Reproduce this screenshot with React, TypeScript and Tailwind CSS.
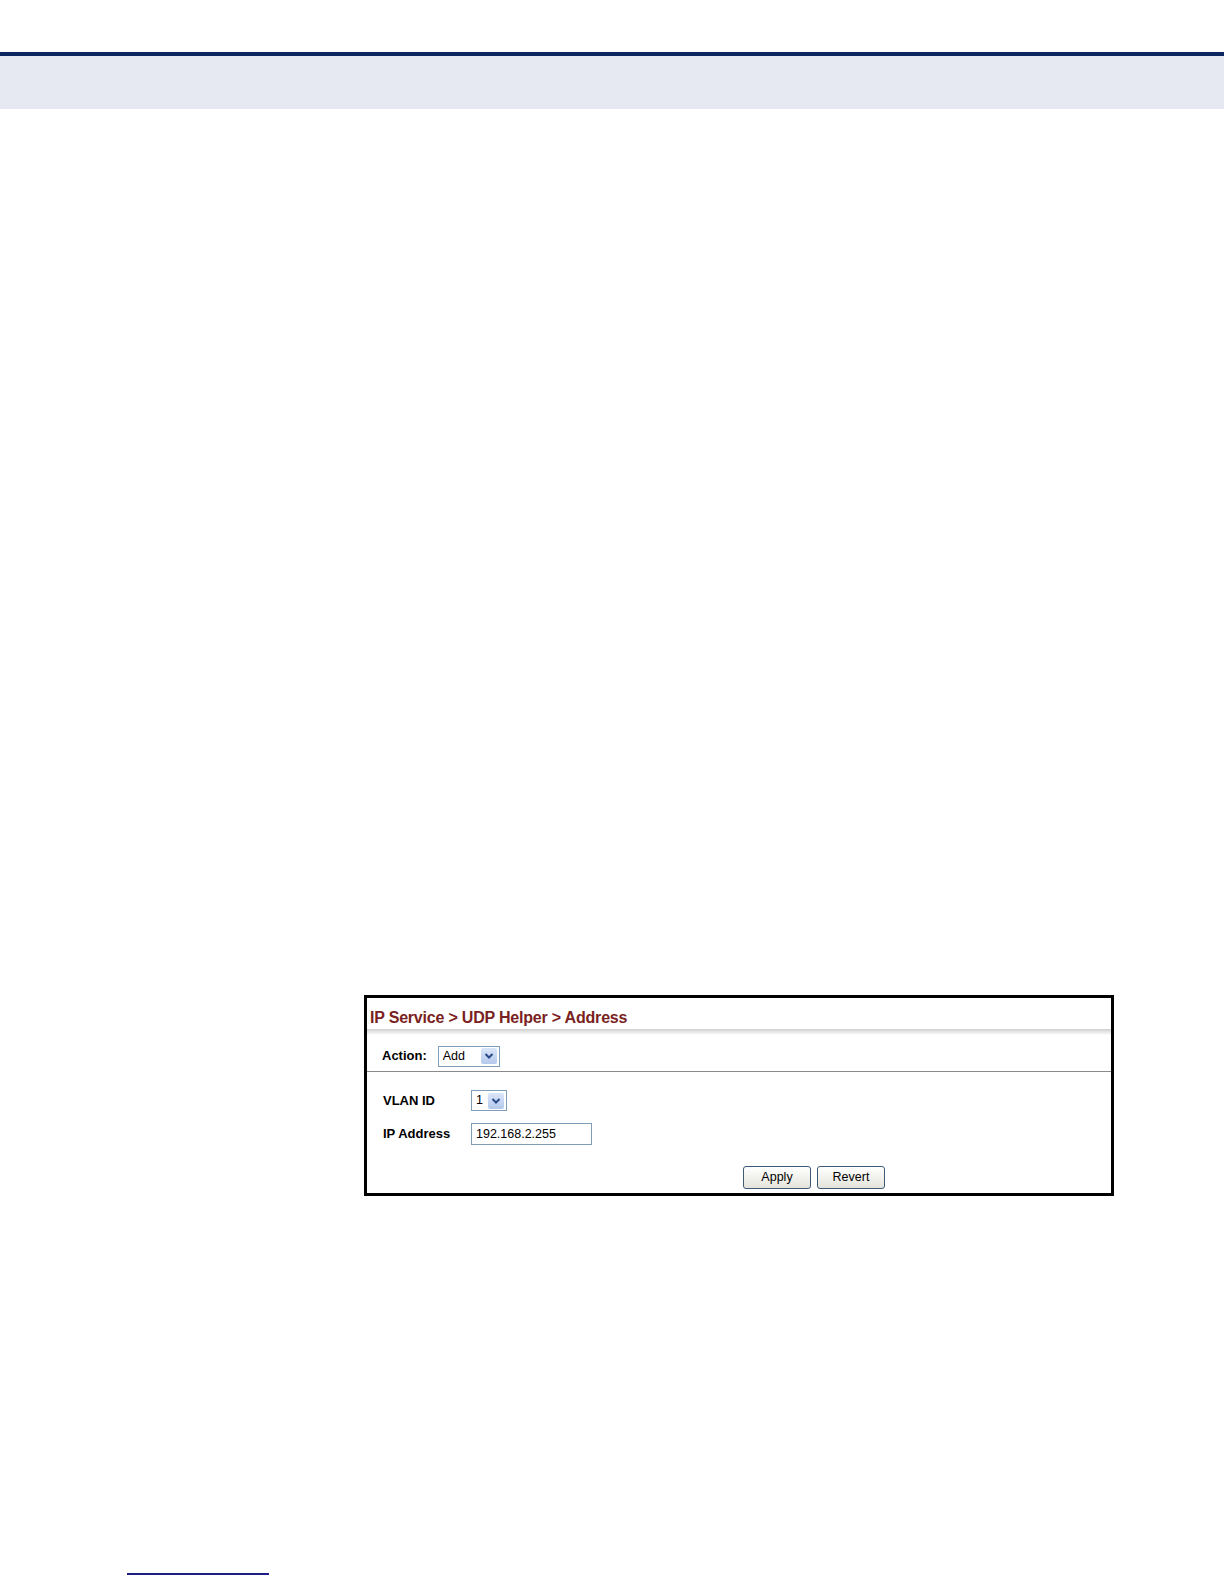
import React from "react";

function Arrow() {
  return (
    <span className="flex h-[16px] w-[16px] items-center justify-center rounded-[2px] bg-gradient-to-b from-[#dbe6f8] to-[#b4c8ec]">
      <svg width="10" height="8" viewBox="0 0 10 8">
        <path d="M1.5 2 L5 5.5 L8.5 2" fill="none" stroke="#2a4a8a" strokeWidth="2" />
      </svg>
    </span>
  );
}

function Select({ value, width }: { value: string; width: string }) {
  return (
    <div className={`flex h-[21px] items-center justify-between border border-[#7f9db9] bg-white pl-[4px] pr-[2px] ${width}`}>
      <span className="text-[12.5px] text-black">{value}</span>
      <Arrow />
    </div>
  );
}

function Button({ label }: { label: string }) {
  return (
    <button className="h-[23px] w-[68px] rounded-[3px] border border-[#3c5a78] bg-gradient-to-b from-white to-[#e4e4dc] text-[12.5px] text-black">
      {label}
    </button>
  );
}

export default function App() {
  return (
    <div className="min-h-[1584px] w-full bg-white font-['Liberation_Sans',Arial,sans-serif]">
      <div className="h-[52px]" />
      <div className="h-[4px] bg-[#0b2660]" />
      <div className="h-[53px] bg-[#e6e9f1]" />

      <div className="ml-[364px] mt-[886px] h-[201px] w-[750px] border-[3px] border-black">
        <div className="flex h-[31px] items-center pl-[3px] pt-[8px]">
          <span className="text-[16px] font-bold tracking-[-0.2px] text-[#7a1f22]">
            IP Service &gt; UDP Helper &gt; Address
          </span>
        </div>
        <div className="h-[6px] bg-gradient-to-b from-[#cfcfcf] to-white" />
        <div className="flex h-[37px] items-center gap-[11px] border-b border-[#8a8a8a] pl-[15px] pt-[6px]">
          <span className="text-[13px] font-bold text-black">Action:</span>
          <Select value="Add" width="w-[62px]" />
        </div>
        <div className="flex flex-col pl-[16px] pt-[18px]">
          <div className="flex h-[21px] items-center">
            <span className="w-[88px] text-[13px] font-bold text-black">VLAN ID</span>
            <Select value="1" width="w-[36px]" />
          </div>
          <div className="mt-[12px] flex h-[22px] items-center">
            <span className="w-[88px] text-[13px] font-bold text-black">IP Address</span>
            <div className="flex h-[22px] w-[121px] items-center border border-[#7f9db9] bg-white pl-[4px] text-[12.5px] text-black">
              192.168.2.255
            </div>
          </div>
          <div className="mt-[21px] flex gap-[6px] pl-[360px]">
            <Button label="Apply" />
            <Button label="Revert" />
          </div>
        </div>
      </div>

      <div className="ml-[127px] mt-[377px] h-[2px] w-[142px] bg-[#1e1e8a]" />
    </div>
  );
}
